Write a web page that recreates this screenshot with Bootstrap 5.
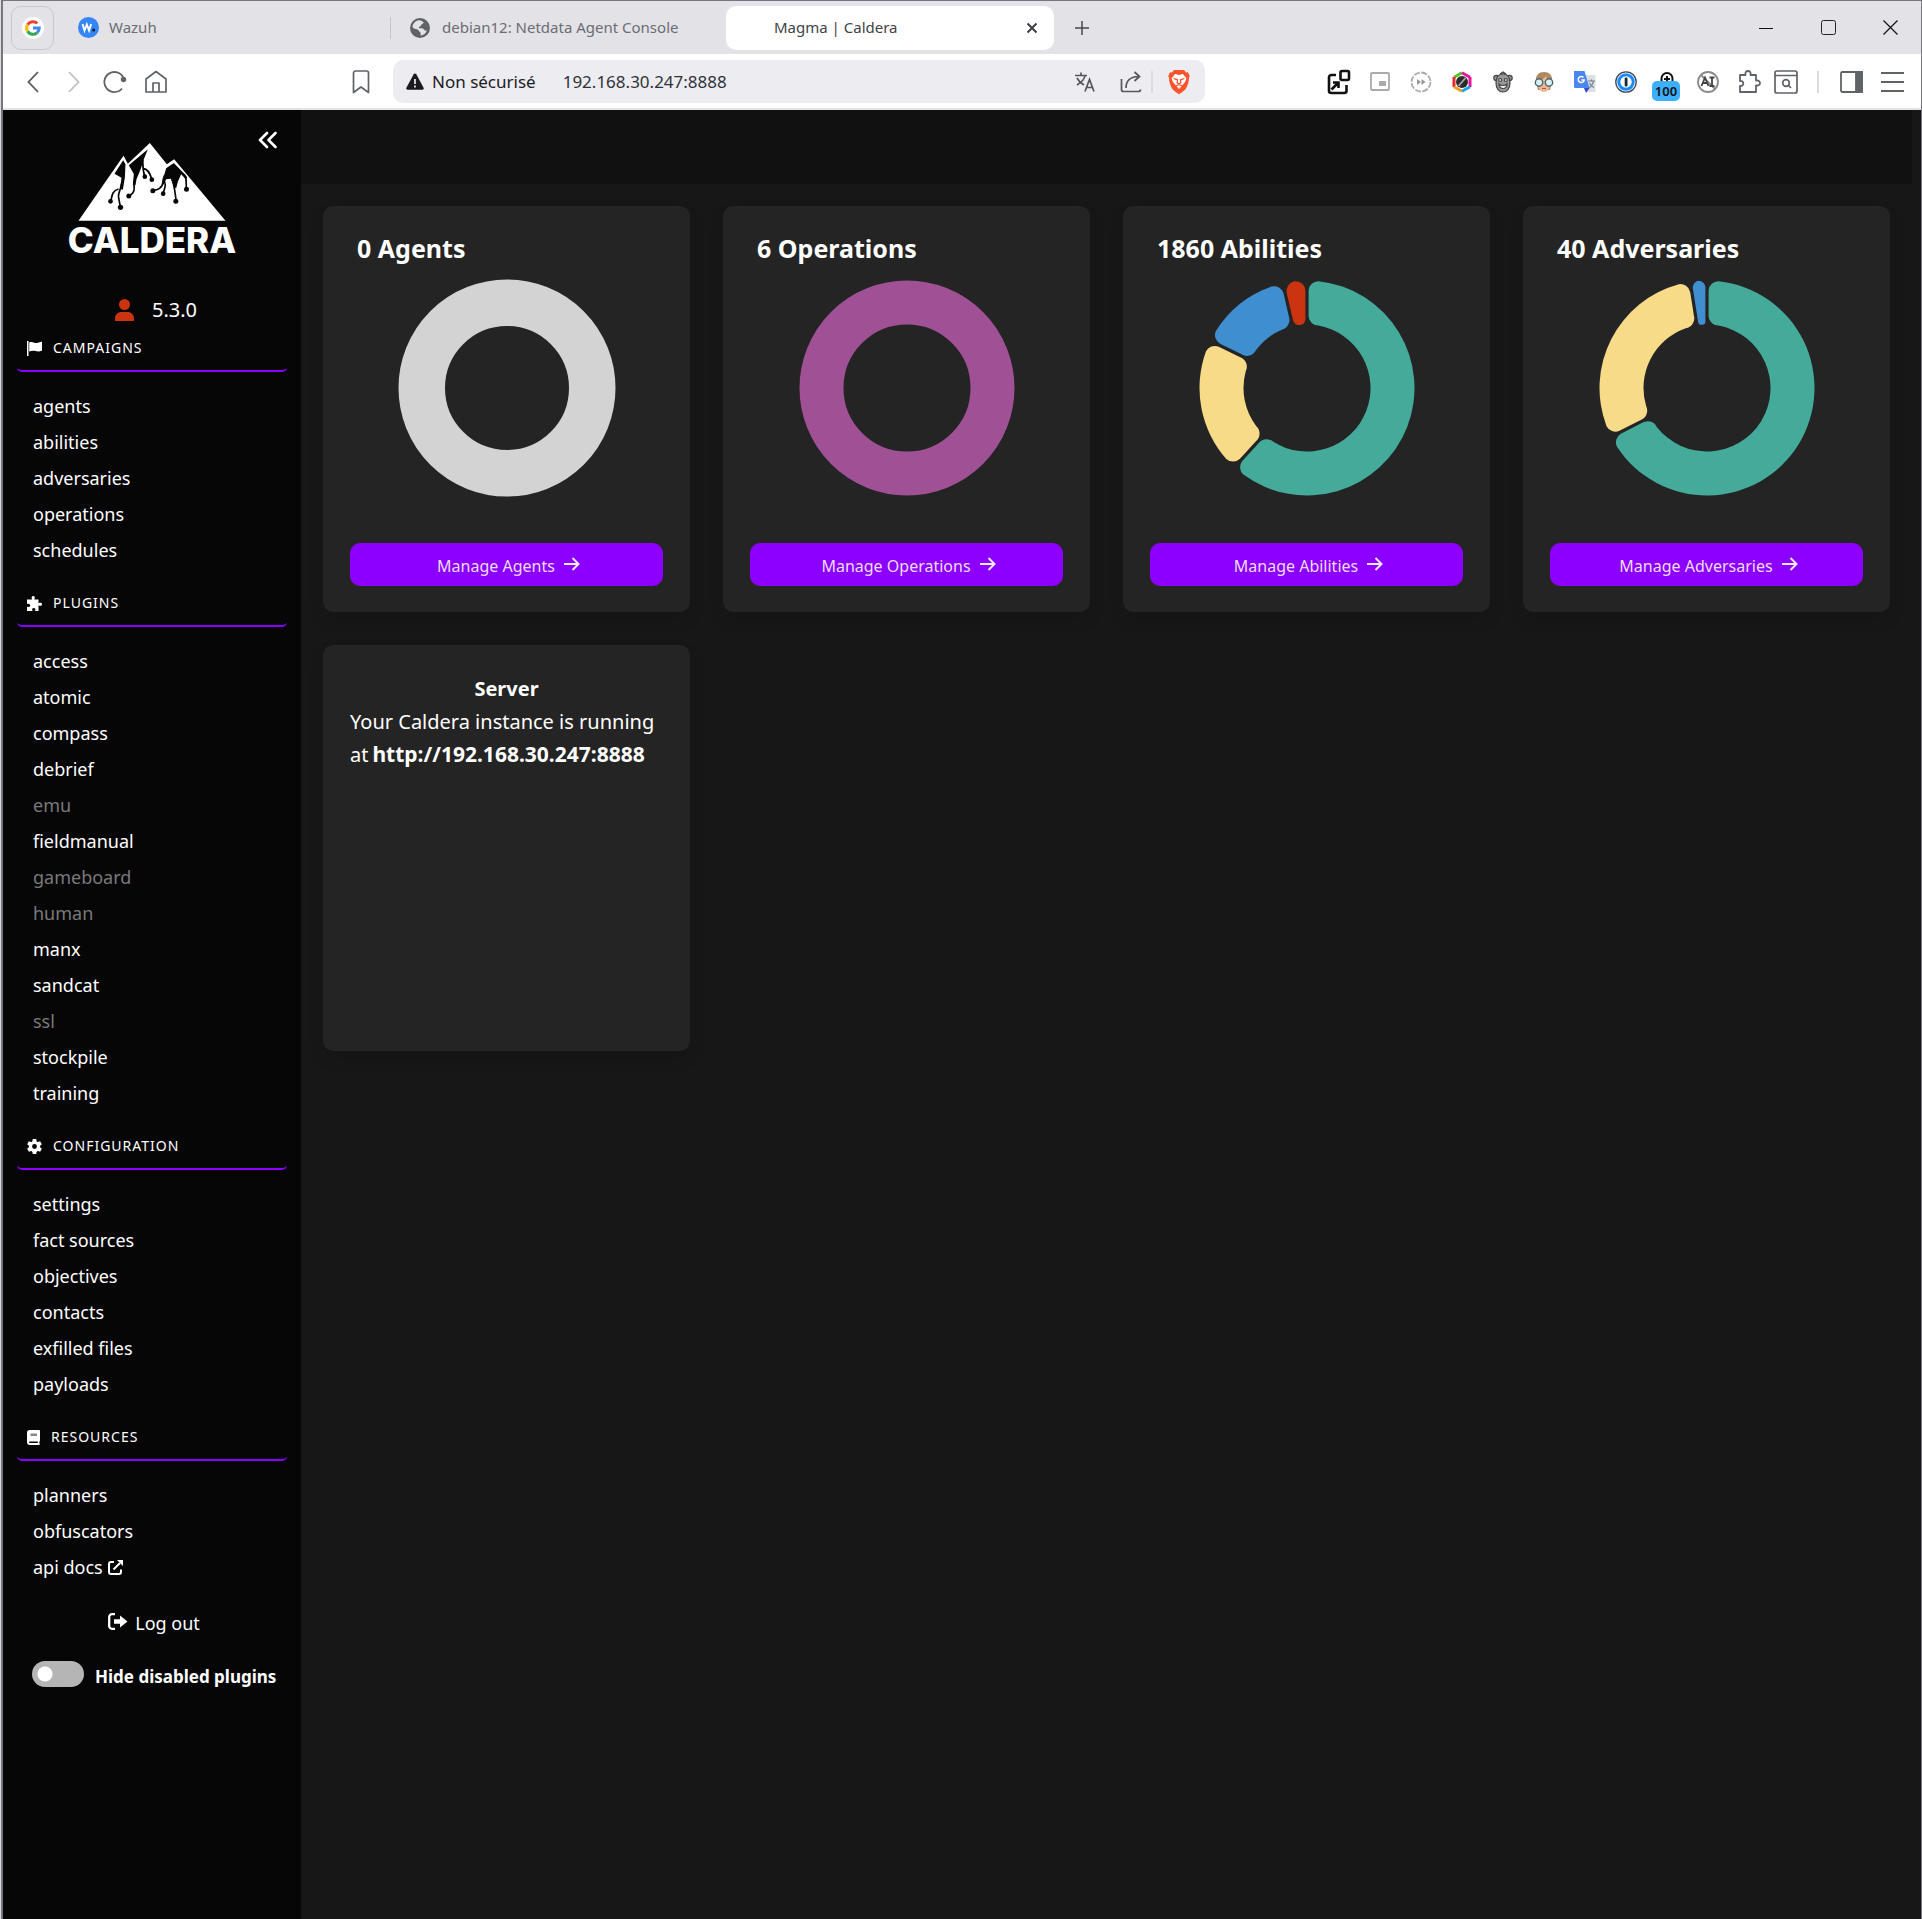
<!DOCTYPE html>
<html lang="fr" data-bs-theme="dark">
<head>
<meta charset="utf-8">
<meta name="viewport" content="width=device-width, initial-scale=1">
<title>Magma | Caldera</title>
<link href="https://cdn.jsdelivr.net/npm/bootstrap@5.3.0/dist/css/bootstrap.min.css" rel="stylesheet">
<style>
:root{--purple:#8b00ff;--panel:#242424;--ink:#5f6368}
html{border-left:1px solid #dcdcdc}
body{font-family:"Noto Sans","Open Sans",sans-serif;background:#171717;color:#fff;border:1px solid #77757d;border-left:2px solid #77757d;border-bottom:0}
svg{display:block;flex:none}
button{background:none;border:0;padding:0;color:inherit}
.ibtn{width:41px;height:40px;display:flex;align-items:center;justify-content:center;flex:none}
/* browser chrome */
.tabstrip{height:53px;background:#e3e2e7;color:#6b6d72;font-size:15px;padding-left:8px}
.pin{width:43px;height:44px;border:1px solid #c9c8ce;border-radius:10px}
.tab{height:44px;width:336px;color:inherit;text-decoration:none}
.tab-sep::before{content:"";width:1px;height:22px;background:#c4c3c9;margin-right:19px}
.tab-on{width:328px;background:#fff;border-radius:10px;color:#414347}
.winbtn{width:62px;height:52px}
.toolbar{height:56px;background:#fff;border-bottom:2px solid #e3e2e7;padding:1px 8px 0 9px;color:var(--ink)}
.urlbar{height:43px;background:#edecf1;border-radius:10px;color:#1b1b1f;font-size:17px;margin:0 113px 0 12px}
.urlbar input{background:none;border:0;outline:0;color:#303238;width:200px;padding:0;margin-left:27px}
.warn{margin-left:13px}
.ebadge{bottom:1px;left:6px;width:28px;height:20px;border-radius:5px;background:#3bb0ff;color:#111;font-size:13px;line-height:20px;font-weight:600}
.vr-light{width:2px;height:22px;background:#dcdbe0}
/* sidebar */
.side{width:298px;flex:none;background:#060606;padding:33px 14px 0;min-height:calc(100vh - 110px)}
.collapse-btn{top:21px;right:24px}
.ver{font-size:20px;height:34px;margin-top:30px;padding-left:8px}
.sec{margin-bottom:14px}
.sec-h{height:45px;border-bottom:2px solid var(--purple);border-radius:5px;padding-left:10px;font-size:14px;font-weight:400;letter-spacing:1px;text-transform:uppercase;margin:0 0 16px}
.sec-h span{margin-left:11px}
.sec a{display:flex;align-items:center;height:36px;padding-left:16px;color:#fff;text-decoration:none;font-size:18px}
.sec a.off{color:#7a7a7a}
.logout{font-size:18px;height:32px;margin-top:22px;padding-left:4px;color:#fff;text-decoration:none}
.switch{appearance:none;flex:none;width:52px;height:26px;border-radius:13px;margin:0;background:radial-gradient(circle at 13px 13px,#fff 7px,#b5b5b5 8px)}
.hiderow{margin:22px 0 0 15px}
.hidelab{font-size:17px;line-height:24px;font-weight:700;margin:4px 0 0 11px}
/* dashboard */
.topband{height:74px;background:#111;margin-right:9px}
.board{padding:22px 31px 0 22px}
.board .row{--bs-gutter-x:33px;row-gap:33px}
.tile{height:406px;background:var(--panel);border-radius:10px;padding:27px 27px 26px;box-shadow:0 8px 16px rgba(10,10,10,.1);font-size:20px;line-height:33px}
.tile h2{font-size:25px;line-height:30px;font-weight:700;margin:0 0 15px 7px}
.srv-url{font-size:21px}
.manage{height:43px;background:var(--purple);border-radius:10px;color:#eedcff;font-size:16px;width:100%;padding:3px 0 0 4px;text-decoration:none}
</style>
<script src="https://cdn.jsdelivr.net/npm/bootstrap@5.3.0/dist/js/bootstrap.bundle.min.js"></script>
</head>
<body>
<header>
 <div class="tabstrip d-flex align-items-center">
  <button class="pin d-flex align-items-center justify-content-center" aria-label="Google"><svg width="22" height="22" viewBox="0 0 22 22"><circle cx="11" cy="11" r="11" fill="#fff"/><g fill="none" stroke-width="3"><path d="M5.600 7.600A6.200 6.200 0 0 1 15.200 6.400" stroke="#ea4335"/><path d="M5.600 14.400a6.600 6.600 0 0 1 0-6.800" stroke="#fbbc05"/><path d="M15.200 15.600a6.200 6.200 0 0 1-9.600-1.200" stroke="#34a853"/><path d="M11 11h6.200a6.200 6.200 0 0 1-2 4.600" stroke="#4285f4"/></g></svg></button>
  <a class="tab d-flex align-items-center ps-4" href="#"><svg width="21" height="21" viewBox="0 0 21 21"><circle cx="10.500" cy="10.500" r="10.500" fill="#3585f9"/><path d="M4.500 7l2 6.500 2.300-6 2.300 6 2-6.500" fill="none" stroke="#fff" stroke-width="1.900"/><circle cx="15.600" cy="13" r="1.500" fill="#0a1a33"/></svg><span style="margin-left:10px">Wazuh</span></a>
  <a class="tab tab-sep d-flex align-items-center" href="#"><svg width="20" height="20" viewBox="0 0 20 20"><circle cx="10" cy="10" r="10" fill="#5f6368"/><path d="M9 2.300c2 .2 3.800 1 5 2.300-1 .3-1 1.400-2 1.700-1.300.3-.8 1.800-2 2.200-1.300.3-1.600 1.300-.5 1.700 1.800.3 3.900-.4 4.500 1.500.2 1 1.500.6 2.800.7-.9 2.700-3 4.800-6.200 5.200-.3-1.600.7-2.300-.5-3.300C8.600 13.300 9 11.800 7.400 11.400 5.500 11 3.600 10.600 2.400 9c.5-3.500 3-6.300 6.600-6.700z" fill="#e3e2e7"/></svg><span style="margin-left:12px">debian12: Netdata Agent Console</span></a>
  <a class="tab tab-on d-flex align-items-center" href="#"><span class="ps-5">Magma | Caldera</span><svg class="ms-auto me-3" width="12" height="12" viewBox="0 0 12 12"><path d="M1.500 1.500l9 9m0-9l-9 9" stroke="#3c3e42" stroke-width="2"/></svg></a>
  <button class="ibtn" style="margin-left:7px" aria-label="Nouvel onglet"><svg width="16" height="16" viewBox="0 0 16 16"><path d="M8 1v14M1 8h14" stroke="#45474b" stroke-width="1.500"/></svg></button>
  <button class="ibtn winbtn ms-auto" aria-label="Réduire"><svg width="14" height="14"><path d="M0 7.500h14" stroke="#111"/></svg></button>
  <button class="ibtn winbtn" aria-label="Agrandir"><svg width="15" height="15"><rect x=".5" y=".5" width="14" height="14" rx="2" fill="none" stroke="#222"/></svg></button>
  <button class="ibtn winbtn" aria-label="Fermer"><svg width="15" height="15"><path d="M.5.5l14 14m0-14l-14 14" stroke="#111" stroke-width="1.200"/></svg></button>
 </div>
 <div class="toolbar d-flex align-items-center">
  <button class="ibtn" aria-label="Retour"><svg width="12" height="22" viewBox="0 0 12 22" fill="none" stroke="#55575c" stroke-width="1.800"><path d="M11 1L1.500 11 11 21"/></svg></button>
  <button class="ibtn" aria-label="Suivant"><svg width="12" height="22" viewBox="0 0 12 22" fill="none" stroke="#bfc0c3" stroke-width="1.800"><path d="M1 1l9.500 10L1 21"/></svg></button>
  <button class="ibtn" aria-label="Recharger"><svg width="24" height="24" viewBox="0 0 24 24" fill="none" stroke="#5f6368" stroke-width="1.800"><path d="M19 18.500A10 10 0 1 1 20.500 8"/><circle cx="20.500" cy="9.500" r="2.700" fill="#5f6368" stroke="none"/></svg></button>
  <button class="ibtn" aria-label="Accueil"><svg width="24" height="24" viewBox="0 0 24 24" fill="none" stroke="#5f6368" stroke-width="1.700" stroke-linejoin="round"><path d="M2 9l10-7.500L22 9v13H2zM9 22v-9h6v9"/></svg></button>
  <button class="ibtn" style="margin-left:164px" aria-label="Favori"><svg width="18" height="24" viewBox="0 0 18 24" fill="none" stroke="#5f6368" stroke-width="1.700" stroke-linejoin="round"><path d="M1.500 3a2 2 0 0 1 2-2h11a2 2 0 0 1 2 2v19.500L9 17l-7.500 5.500z"/></svg></button>
  <div class="urlbar d-flex align-items-center flex-grow-1">
   <svg class="warn" width="18" height="17" viewBox="0 0 18 17"><path d="M9 .5c.6 0 1 .3 1.300.8l7.300 13.500c.5 1-.1 1.900-1.200 1.900H1.600c-1.100 0-1.700-.9-1.200-1.900L7.700 1.300C8 .8 8.400.5 9 .5z" fill="#1b1b1f"/><path d="M9 6v5m0 1.500v2" stroke="#edecf1" stroke-width="1.700"/></svg>
   <label class="ms-2 text-nowrap" for="addr">Non sécurisé</label>
   <input id="addr" type="text" value="192.168.30.247:8888">
   <button class="ibtn ms-auto" aria-label="Traduire"><svg width="22" height="22" viewBox="0 0 22 22" fill="none" stroke="#55575c" stroke-width="1.700"><path d="M1 4.500h12M7 1.500v3M3 14C8 11 10.500 8 11 4.500M3 7c1.500 3 4 5.500 7 7M11 20.500l4.500-12 4.500 12M12.700 16.500h5.800"/></svg></button>
   <button class="ibtn" style="margin-left:5px" aria-label="Partager"><svg width="22" height="22" viewBox="0 0 22 22" fill="none" stroke="#55575c" stroke-width="1.700"><path d="M1.500 8v10.500c0 1.300.7 2 2 2h15c1.300 0 2-.7 2-2M6 17c0-7 4-11.500 13-11.500M14.500 1l5 4.500-5 4.500"/></svg></button>
   <span class="vr-light"></span>
   <button class="ibtn" style="margin:0 6px 0 5px" aria-label="Brave"><svg width="22" height="26" viewBox="0 0 22 26"><path d="M6 1h10l2 2.500 2-.3L21.700 7l-.7 2c0 4-1.500 8-3 10.500-1.300 2-4.500 4-7 5.800-2.500-1.800-5.700-3.800-7-5.800C2.500 17 1 13 1 9L.3 7 2 3.200l2 .3z" fill="#fb542b"/><path d="M11 6l4-1 3.500 4.500-1.500 3.500-2.500 3-3.500 4-3.500-4-2.500-3-1.500-3.500L7 5z" fill="#fff"/><path d="M5.500 9.500l4 1.300-.3 3 1.800 1 1.800-1-.3-3 4-1.300M8 17l3-1.500 3 1.500" fill="none" stroke="#fb542b" stroke-width="1.300"/></svg></button>
  </div>
  <button class="ibtn" aria-label="Extension"><svg width="24" height="26" viewBox="0 0 24 26" fill="none" stroke="#111" stroke-width="2.600"><rect x="13.500" y="2" width="8.500" height="9" rx="1.500"/><path d="M9 6H4.500C3 6 2 7 2 8.500V22c0 1.500 1 2 2.500 2H17c1.500 0 2.500-.5 2.500-2v-6M4.500 20.500l6-6M6 13.500h5.500V19"/></svg></button>
  <button class="ibtn" aria-label="Image dans l'image"><svg width="20" height="19" fill="none" stroke="#aaabad" stroke-width="1.800"><rect x="1" y="1" width="18" height="17" rx="1"/><rect x="9" y="9" width="7" height="5" fill="#aaabad" stroke="none"/></svg></button>
  <button class="ibtn" aria-label="Lecture rapide"><svg width="22" height="22" viewBox="0 0 22 22"><circle cx="11" cy="11" r="9.500" fill="none" stroke="#aaabad" stroke-width="1.800" stroke-dasharray="6 1.460"/><path d="M7 8l4 3-4 3zM11.500 8l4 3-4 3z" fill="#999"/></svg></button>
  <button class="ibtn" aria-label="Couleurs"><svg width="20" height="22" viewBox="0 0 20 22" fill="none" stroke-width="3"><path d="M10 1.800L2 6.300" stroke="#57c22d"/><path d="M10 1.800l8 4.500" stroke="#e5149b"/><path d="M2 6v10" stroke="#e8262f"/><path d="M18 6v10" stroke="#e5149b"/><path d="M2 15.700l8 4.500" stroke="#ff9b1c"/><path d="M18 15.700l-8 4.500" stroke="#1ba4e8"/><circle cx="10" cy="11" r="6" fill="#2b2b2b"/><path d="M6.500 15l7-8" stroke="#aaa" stroke-width="1.800"/></svg></button>
  <button class="ibtn" aria-label="Singe"><svg width="20" height="22" viewBox="0 0 20 22" fill="#999" stroke="#444" stroke-width="1.200"><circle cx="3.500" cy="7" r="2.700"/><circle cx="16.500" cy="7" r="2.700"/><path d="M10 3c5 0 7 3.500 7 9s-3 9-7 9-7-3.500-7-9 2-9 7-9zM7 3l3-2 3 2"/><path d="M6 13c2 2 6 2 8 0 0 6-8 6-8 0z" fill="#eee"/><circle cx="7.200" cy="9" r="1.500" fill="#ddd"/><circle cx="12.800" cy="9" r="1.500" fill="#ddd"/></svg></button>
  <button class="ibtn" aria-label="Avatar"><svg width="22" height="22" viewBox="0 0 22 22"><path d="M3 11C2 4 6 1 11 1s9 3 8 10l-2 8H5z" fill="#b18960"/><path d="M4 10c3 0 7-2 9-5 1 3 3 4 5 5 0 6-3 11-7 11S4 16 4 10z" fill="#efb78f"/><g fill="#d6f2f6" stroke="#45666e" stroke-width="1.400"><circle cx="6" cy="11.500" r="3.700"/><circle cx="16" cy="11.500" r="3.700"/></g><path d="M9 17.500h4" stroke="#b55"/></svg></button>
  <button class="ibtn" aria-label="Google Traduction"><svg width="22" height="22" viewBox="0 0 22 22"><path d="M9 4h12.500v17H13z" fill="#dcdfe3"/><path d="M14 10h7m-3.500-1.500V10m-2.500 7c2.500-1.500 4-4 4.500-7m-4 2c1 2 2.500 3.500 4.500 4.500" fill="none" stroke="#6b7f8c" stroke-width="1.200"/><path d="M0 0h10.500l5 17H1.500A1.500 1.500 0 0 1 0 15.500z" fill="#4a87ee"/><path d="M10 17h5.500L12 22z" fill="#3a46c0"/><path d="M9.500 6.500a3 3 0 1 0 .7 2.500H7.300" fill="none" stroke="#fff" stroke-width="1.500"/></svg></button>
  <button class="ibtn" aria-label="1Password"><svg width="22" height="22" viewBox="0 0 22 22"><circle cx="11" cy="11" r="10.200" fill="#fff" stroke="#3d4754" stroke-width="1.300"/><circle cx="11" cy="11" r="7.200" fill="#fff" stroke="#1a8cff" stroke-width="3"/><rect x="9.700" y="6.500" width="2.800" height="9" rx="1" fill="#1b2733"/></svg></button>
  <button class="ibtn position-relative" aria-label="Compteur"><svg width="14" height="20" viewBox="0 0 14 20" fill="none" stroke="#111" stroke-width="2"><path d="M1.500 10V6.500a5.500 5.500 0 0 1 11 0V10M7 4v6M4 7h6"/></svg><span class="ebadge position-absolute text-center">100</span></button>
  <button class="ibtn" aria-label="Sans IA"><svg width="22" height="22" viewBox="0 0 22 22" fill="none" stroke="#8a8a8a" stroke-width="1.800"><circle cx="11" cy="11" r="10"/><path d="M4 4l14 14"/><path d="M4.500 15L8 6.500l3.500 8.500M5.500 12h5M12.500 6.500h5M15 6.500V15m-2.500 0h5" stroke="#444"/></svg></button>
  <button class="ibtn" aria-label="Extensions"><svg width="24" height="24" viewBox="0 0 24 24" fill="none" stroke="#5f6368" stroke-width="1.800" stroke-linejoin="round"><path d="M3 5h5.500c-.6-2.500.6-4 2.500-4s3 1.500 2.500 4H19v5.500c2.500-.5 4 .7 4 2.500s-1.500 3-4 2.500V22H3v-6c2 .4 3.300-.8 3.300-2.500S5 10.600 3 11z"/></svg></button>
  <button class="ibtn" style="width:34px" aria-label="Rechercher"><svg width="24" height="24" viewBox="0 0 24 24" fill="none" stroke="#5f6368" stroke-width="1.700"><rect x="1" y="1" width="22" height="22" rx="2"/><path d="M1 5.500h22M14.500 15.500L17 18"/><circle cx="12" cy="13" r="3.300"/></svg></button>
  <span class="vr-light" style="margin:0 12px 0 14px"></span>
  <button class="ibtn" aria-label="Panneau latéral"><svg width="23" height="22" fill="none" stroke="#5f6368" stroke-width="1.800"><rect x="1" y="1" width="21" height="20" rx="1.500"/><path d="M16 1h6v20h-6z" fill="#5f6368"/></svg></button>
  <button class="ibtn" aria-label="Menu"><svg width="23" height="20" stroke="#5f6368" stroke-width="1.800"><path d="M0 1h23M0 10h23M0 19h23"/></svg></button>
 </div>
</header>

<div class="d-flex">
 <aside class="side position-relative">
  <button class="collapse-btn position-absolute" aria-label="Collapse"><svg width="19" height="18" viewBox="0 0 19 18" fill="none" stroke="#fff" stroke-width="2.600" stroke-linecap="round" stroke-linejoin="round"><path d="M9 2L2 9l7 7M17.500 2l-7 7 7 7"/></svg></button>
  <svg class="mx-auto" width="180" height="120" viewBox="-6 0 180 120" role="img" aria-label="Caldera">
   <g transform="translate(-68.500 -38) scale(.33333)">
    <path d="M237 347L372 152l13 24 66-62 51 64 22-15 154 184z" fill="#fff"/>
    <g fill="#060606"><path d="M345 206L371 166l7 12-2 40-6 36-8-2 4-34z"/><path d="M388 181L445 133l-12 30-9 28-13 32-3 18-8-2 3-32z"/><path d="M500 190l23-16 24 25 16 18-4 6-14-15-10 22-5 20-6-3-10-26-14 2-8 16-5-4z"/></g>
    <g fill="none" stroke="#060606" stroke-width="5"><path d="M366 235c-2 22-10 25-9 40 2 14 3 19 6 31M357 252c-20 6-19 20-23 36M405 225c-4 24 2 25-3 35-3 8-8 8-13 13M430 165c0 20-1 30 6 50M431 190c14 2 20 12 26 33M496 210c-12 22 2 28-16 40-7 5-12 5-20 7M492 225c10 14 4 22-1 40M517 220c8 20 9 40 13 68M549 205c16 8 9 30 12 47"/></g>
    <g fill="#060606"><circle cx="333" cy="289" r="7"/><circle cx="363" cy="307" r="8"/><circle cx="388" cy="273" r="7.500"/><circle cx="436" cy="215" r="7"/><circle cx="457" cy="224" r="7"/><circle cx="460" cy="257" r="7.500"/><circle cx="491" cy="266" r="7"/><circle cx="529" cy="289" r="7.500"/><circle cx="561" cy="253" r="7.500"/></g>
   </g>
   <text x="84" y="110" text-anchor="middle" fill="#fff" font-family="Inter, sans-serif" font-weight="800" font-size="35">CALDERA</text>
  </svg>
  <div class="ver d-flex align-items-center justify-content-center"><svg width="19" height="22" viewBox="0 0 19 22" fill="#cc3311"><circle cx="9.500" cy="5.500" r="5.500"/><path d="M0 22v-2.500C0 15.500 3 13 6.500 13h6c3.500 0 6.500 2.500 6.500 6.500V22z"/></svg><span style="margin-left:18px">5.3.0</span></div>

  <nav>
   <section class="sec"><h3 class="sec-h d-flex align-items-center"><svg width="15" height="15" viewBox="0 0 15 15" fill="#fff"><path d="M0 0h1.500v15H0zM2.200 1.500c3-1.500 5 .8 7.500.5 2-.2 3.500-1 5.300-1.500v9c-3 1.500-4.500 1-6.500.5s-4-.5-6.300.5z"/></svg><span>Campaigns</span></h3>
    <a href="#">agents</a><a href="#">abilities</a><a href="#">adversaries</a><a href="#">operations</a><a href="#">schedules</a></section>
   <section class="sec"><h3 class="sec-h d-flex align-items-center"><svg width="15" height="15" viewBox="0 0 15 15" fill="#fff"><path d="M0 3.500h5.200C4 1.500 4.800 0 6.200 0s2.300 1.500 1.100 3.500H11.500v3.700c2-1 3.500-.4 3.500 1s-1.500 2.300-3.500 1.100V15H8c1-2 .3-3-1.200-3s-2.300 1-1.200 3H0v-4.500c1.800 1 3.200.4 3.200-1S1.800 7.200 0 8z"/></svg><span>Plugins</span></h3>
    <a href="#">access</a><a href="#">atomic</a><a href="#">compass</a><a href="#">debrief</a><a href="#" class="off">emu</a><a href="#">fieldmanual</a><a href="#" class="off">gameboard</a><a href="#" class="off">human</a><a href="#">manx</a><a href="#">sandcat</a><a href="#" class="off">ssl</a><a href="#">stockpile</a><a href="#">training</a></section>
   <section class="sec"><h3 class="sec-h d-flex align-items-center"><svg width="15" height="15" viewBox="0 0 15 15"><g fill="#fff"><circle cx="7.500" cy="7.500" r="5.600"/><path d="M5.800 0h3.400l.6 3H5.200zM5.800 15h3.400l.6-3H5.200z"/><path d="M5.800 0h3.400l.6 3H5.200zM5.800 15h3.400l.6-3H5.200z" transform="rotate(60 7.500 7.500)"/><path d="M5.800 0h3.400l.6 3H5.200zM5.800 15h3.400l.6-3H5.200z" transform="rotate(120 7.500 7.500)"/></g><circle cx="7.500" cy="7.500" r="2.400" fill="#060606"/></svg><span>Configuration</span></h3>
    <a href="#">settings</a><a href="#">fact sources</a><a href="#">objectives</a><a href="#">contacts</a><a href="#">exfilled files</a><a href="#">payloads</a></section>
   <section class="sec"><h3 class="sec-h d-flex align-items-center"><svg width="13" height="15" viewBox="0 0 13 15"><path d="M2.500 0H12c.6 0 1 .4 1 1v9.500c0 .5-.3.800-.6 1v1.800c.6.2.6 1.700-.2 1.700H2.800C1.200 15 0 13.800 0 12.200V2.500C0 1 1 0 2.500 0z" fill="#fff"/><path d="M3.500 3.500h6.500v2.500H3.500z" fill="#888"/><path d="M2.800 11.500h8v1.500h-8a.7.7 0 0 1 0-1.500z" fill="#060606"/></svg><span>Resources</span></h3>
    <a href="#">planners</a><a href="#">obfuscators</a><a href="#">api docs<svg style="margin-left:5px" width="15" height="15" viewBox="0 0 15 15" fill="none" stroke="#fff" stroke-width="2"><path d="M6 2H3a2 2 0 0 0-2 2v8a2 2 0 0 0 2 2h8a2 2 0 0 0 2-2V9.500M5.500 9.500L12 3"/><path d="M9 0h6v6z" fill="#fff" stroke="none"/></svg></a></section>
  </nav>
  <a class="logout d-flex align-items-center justify-content-center" href="#"><svg class="mb-1" width="20" height="17" viewBox="0 0 20 17"><path d="M7 1.200H4A2.800 2.800 0 0 0 1.200 4v9A2.800 2.800 0 0 0 4 15.800h3" fill="none" stroke="#fff" stroke-width="2.300"/><path d="M6 6.300h6V2.500l7.500 6-7.500 6v-3.800H6z" fill="#fff"/></svg><span style="margin-left:7px">Log out</span></a>
  <div class="hiderow d-flex"><input class="switch" type="checkbox" role="switch" id="hide"><label class="hidelab text-nowrap" for="hide">Hide disabled plugins</label></div>
 </aside>

 <main class="flex-grow-1">
  <div class="topband"></div>
  <div class="board">
   <div class="row">
    <div class="col-3"><div class="tile d-flex flex-column"><h2>0 Agents</h2><svg class="donut mx-auto" width="220" height="220" viewBox="-110 -110 220 220" role="img" aria-label="Agents"><circle r="85.250" fill="none" stroke="#d3d3d3" stroke-width="46.500"/></svg><a class="manage mt-auto d-flex align-items-center justify-content-center" href="#">Manage Agents<svg class="ms-2 mb-1" width="17" height="14" viewBox="0 0 17 14" fill="none" stroke="#f3e6ff" stroke-width="2"><path d="M1 7h14M9.500 1l6 6-6 6"/></svg></a></div></div>
    <div class="col-3"><div class="tile d-flex flex-column"><h2>6 Operations</h2><svg class="donut mx-auto" width="220" height="220" viewBox="-110 -110 220 220" role="img" aria-label="Operations"><circle r="85.500" fill="none" stroke="#a05195" stroke-width="44"/></svg><a class="manage mt-auto d-flex align-items-center justify-content-center" href="#">Manage Operations<svg class="ms-2 mb-1" width="17" height="14" viewBox="0 0 17 14" fill="none" stroke="#f3e6ff" stroke-width="2"><path d="M1 7h14M9.500 1l6 6-6 6"/></svg></a></div></div>
    <div class="col-3"><div class="tile d-flex flex-column"><h2>1860 Abilities</h2><svg class="donut mx-auto" data-angles="222.500,73.500,51,13" width="220" height="220" viewBox="-110 -110 220 220" role="img" aria-label="Abilities"></svg><a class="manage mt-auto d-flex align-items-center justify-content-center" href="#">Manage Abilities<svg class="ms-2 mb-1" width="17" height="14" viewBox="0 0 17 14" fill="none" stroke="#f3e6ff" stroke-width="2"><path d="M1 7h14M9.500 1l6 6-6 6"/></svg></a></div></div>
    <div class="col-3"><div class="tile d-flex flex-column"><h2>40 Adversaries</h2><svg class="donut mx-auto" data-angles="243,108,9" width="220" height="220" viewBox="-110 -110 220 220" role="img" aria-label="Adversaries"></svg><a class="manage mt-auto d-flex align-items-center justify-content-center" href="#">Manage Adversaries<svg class="ms-2 mb-1" width="17" height="14" viewBox="0 0 17 14" fill="none" stroke="#f3e6ff" stroke-width="2"><path d="M1 7h14M9.500 1l6 6-6 6"/></svg></a></div></div>
    <div class="col-3"><div class="tile"><div class="text-center fw-bold">Server</div><div>Your Caldera instance is running</div><div class="d-flex align-items-baseline"><span class="me-1">at</span><strong class="srv-url">http://192.168.30.247:8888</strong></div></div></div>
   </div>
  </div>
 </main>
</div>
<script>
// Doughnut segments with rounded corners and an even gap between neighbours
const COLORS=['#44aa99','#f7db89','#3f8fd0','#cc3311'],RO=107.5,RI=63.5,GAP=1.6;
const pt=(r,a)=>(r*Math.sin(a)).toFixed(2)+' '+(-r*Math.cos(a)).toFixed(2);
document.querySelectorAll('[data-angles]').forEach(svg=>{
  let start=0,out='';
  svg.dataset.angles.split(',').forEach((deg,i)=>{
    const a=start,b=start+deg*Math.PI/180,off=r=>Math.asin(GAP/r);
    const half=r=>r*((b-a)/2)-GAP;
    const ro=Math.min(10,half(RO)),ri=Math.min(10,half(RI));
    const l=r=>a+off(r),k=r=>b-off(r),big=b-a>Math.PI?1:0;
    out+=`<path fill="${COLORS[i]}" d="M${pt(RI+ri,l(RI+ri))}L${pt(RO-ro,l(RO-ro))}A${ro} ${ro} 0 0 1 ${pt(RO,l(RO)+ro/RO)}A${RO} ${RO} 0 ${big} 1 ${pt(RO,k(RO)-ro/RO)}A${ro} ${ro} 0 0 1 ${pt(RO-ro,k(RO-ro))}L${pt(RI+ri,k(RI+ri))}A${ri} ${ri} 0 0 1 ${pt(RI,k(RI)-ri/RI)}A${RI} ${RI} 0 ${big} 0 ${pt(RI,l(RI)+ri/RI)}A${ri} ${ri} 0 0 1 ${pt(RI+ri,l(RI+ri))}z"/>`;
    start=b;
  });
  svg.innerHTML=out;
});
</script>
</body>
</html>
